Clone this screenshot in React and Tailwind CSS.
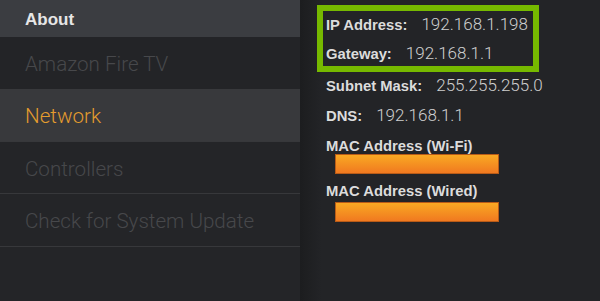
import React from "react";

const font = { fontFamily: '"Liberation Sans", Arial, sans-serif' };
const thin = { fontFamily: 'Roboto, "Liberation Sans", Arial, sans-serif' };

function MenuItem({ label, h, active, bg }) {
  return (
    <div
      className={`flex items-center pl-[25px] border-b border-[#37383b] ${h} ${bg} ${
        active ? "text-[#e49c2e]" : "text-[#47484b]"
      } text-[20.6px] font-light leading-none`}
      style={thin}
    >
      <span className="pt-[3px]">{label}</span>
    </div>
  );
}

function InfoRow({ label, value, cls }) {
  return (
    <div className={`flex items-baseline whitespace-nowrap ${cls}`}>
      <span className="font-bold text-[14.8px] text-[#dcdcdc]">{label}</span>
      <span className="ml-[14px] text-[17px] font-light text-[#cfcfcf]" style={thin}>
        {value}
      </span>
    </div>
  );
}

export default function App() {
  return (
    <div className="w-[600px] h-[301px] flex overflow-hidden bg-[#232427]" style={font}>
      <div className="w-[300px] flex flex-col bg-[#242528]">
        <div className="h-[37px] bg-[#3b3d41] flex items-center pl-[25px]">
          <span className="font-bold text-[17px] text-[#e6e6e6] pt-[2px]">About</span>
        </div>
        <div
          className="h-[52px] flex items-center pl-[25px] bg-[#232427] text-[20.6px] font-light leading-none text-[#47484b]"
          style={thin}
        >
          <span className="pt-[3px]">Amazon Fire TV</span>
        </div>
        <MenuItem label="Network" h="h-[53px]" active bg="bg-[#38393c]" />
        <MenuItem label="Controllers" h="h-[52px]" bg="bg-[#242528]" />
        <MenuItem label="Check for System Update" h="h-[53px]" bg="bg-[#242528]" />
      </div>
      <div className="w-[300px] flex flex-col bg-[linear-gradient(to_right,#1c1d1f_0px,#1e1f21_6px,#232427_22px)]">
        <div className="ml-[17px] mt-[5px] w-[222px] h-[67px] border-[6px] border-[#76b900] pl-[3px]">
          <div className="-mt-px flex flex-col">
            <InfoRow label="IP Address:" value="192.168.1.198" cls="h-[29px] leading-[29px]" />
            <InfoRow label="Gateway:" value="192.168.1.1" cls="h-[29px] leading-[29px]" />
          </div>
        </div>
        <div className="pl-[26px] flex flex-col">
          <InfoRow label="Subnet Mask:" value="255.255.255.0" cls="-mt-[2px] h-[30px] leading-[30px]" />
          <InfoRow label="DNS:" value="192.168.1.1" cls="h-[30px] leading-[30px]" />
          <div className="mt-[7px] h-[18px] leading-[18px] font-bold text-[14.8px] text-[#dcdcdc] whitespace-nowrap">
            MAC Address (Wi-Fi)
          </div>
          <div className="-mt-px ml-[9px] w-[164px] h-[20px] border border-[#b95b17] bg-[linear-gradient(to_bottom,#f9a923,#f07920)]" />
          <div className="mt-[8px] h-[18px] leading-[18px] font-bold text-[14.8px] text-[#dcdcdc] whitespace-nowrap">
            MAC Address (Wired)
          </div>
          <div className="mt-[2px] ml-[9px] w-[164px] h-[20px] border border-[#b95b17] bg-[linear-gradient(to_bottom,#f9a923,#f07920)]" />
        </div>
      </div>
    </div>
  );
}
